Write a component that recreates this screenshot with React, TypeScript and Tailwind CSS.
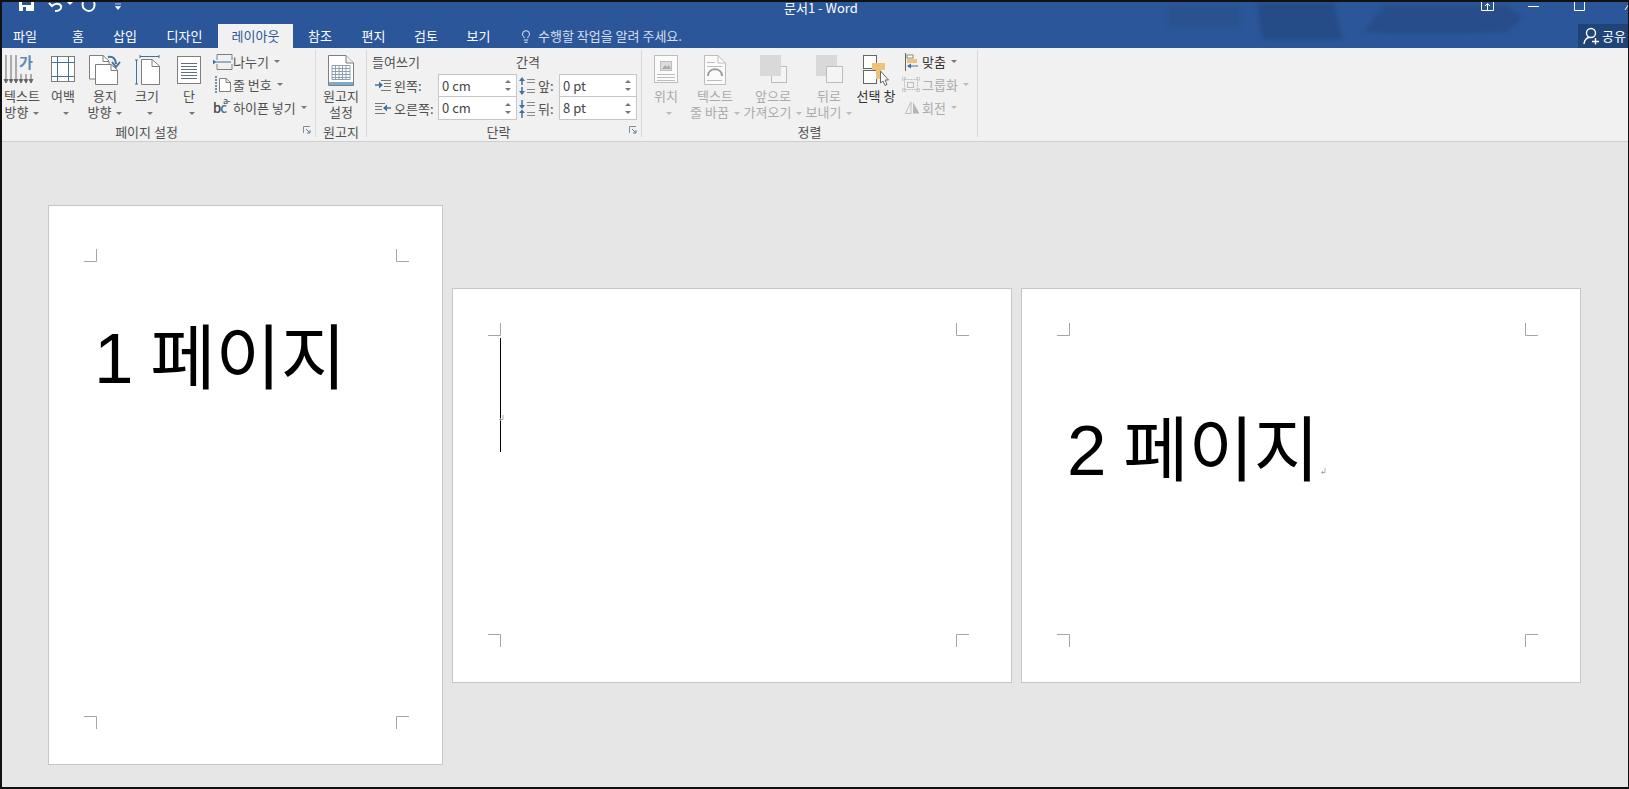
// Word ribbon (레이아웃 tab) with three pages in the document canvas.
import { Lightbulb } from 'lucide-react';
import type { ReactNode } from 'react';

const BLUE = '#41719c';
const LINE = '#7f7f7f';
const OFF = '#bdbdbd';

function Caret({ off }: { off?: boolean }) {
  return <span className={`inline-block w-0 h-0 ml-[5px] align-middle border-x-[3px] border-t-[3px] border-x-transparent ${off ? 'border-t-[#bbbbbb]' : 'border-t-[#777777]'}`} />;
}

function BigButton(props: { icon: ReactNode; lines: ReactNode[]; className: string; off?: boolean; dark?: boolean }) {
  const color = props.off ? 'text-[#ababab]' : props.dark ? 'text-[#333333]' : 'text-[#505050]';
  return (
    <div className={`flex flex-col items-center shrink-0 pt-[5px] ${props.className} ${color}`}>
      <div className="h-[33px] flex items-start justify-center">{props.icon}</div>
      {props.lines.map((l, i) => (
        <div key={i} className="h-[16px] leading-[16px] whitespace-nowrap">{l}</div>
      ))}
    </div>
  );
}

function SmallRow(props: { icon: ReactNode; label: string; off?: boolean; dark?: boolean }) {
  const color = props.off ? 'text-[#ababab]' : props.dark ? 'text-[#333333]' : 'text-[#505050]';
  return (
    <div className={`h-[23px] flex items-center whitespace-nowrap ${color}`}>
      <span className="w-[20px] h-[20px] flex items-center shrink-0">{props.icon}</span>
      {props.label}
      <Caret off={props.off} />
    </div>
  );
}

function Launcher() {
  return (
    <svg width="8" height="8" viewBox="0 0 8 8" className="absolute right-[4px] bottom-[3px]" fill="none">
      <path d="M0.5 7V0.5H7" stroke="#8a8a8a" />
      <path d="M3 3L7 7M7 4V7H4" stroke="#5f7f9f" />
    </svg>
  );
}

function Group(props: { label: string; className: string; labelClass?: string; launcher?: boolean; children: ReactNode }) {
  return (
    <section className={`relative shrink-0 h-[87px] mt-[2px] border-r border-[#d9d9d9] ${props.className}`}>
      <div className="h-[74px] flex">{props.children}</div>
      <div className={`h-[16px] leading-[16px] text-center text-[#505050] whitespace-nowrap ${props.labelClass ?? ''}`}>{props.label}</div>
      {props.launcher && <Launcher />}
    </section>
  );
}

function SpinField(props: { value: string; top?: boolean }) {
  return (
    <div className={`h-full flex items-center justify-between bg-white border border-[#c6c6c6] pl-[3px] pr-[5px] text-[#444444] ${props.top ? '' : 'border-t-0'}`}>
      {props.value}
      <span className="flex flex-col gap-[5px]">
        <span className="w-0 h-0 border-x-[3px] border-b-[3px] border-x-transparent border-b-[#777777]" />
        <span className="w-0 h-0 border-x-[3px] border-t-[3px] border-x-transparent border-t-[#777777]" />
      </span>
    </div>
  );
}

// ---- ribbon icons ----
function TextDirIcon() {
  return (
    <svg width="36" height="30" viewBox="0 0 36 30" fill="none" className="overflow-visible">
      {[2, 7, 12, 17, 22, 27].map((x, i) => (
        <g key={x} stroke="#666666">
          <path d={`M${x} ${i < 3 ? 0 : 19}V26`} />
          <path d={`M${x - 2} 24L${x} 28L${x + 2} 24`} fill="#666666" />
        </g>
      ))}
      <text x="15" y="13" fontSize="15" fontWeight="700" fill="#5b8bb8" fontFamily="Noto Sans CJK KR">가</text>
    </svg>
  );
}

function MarginIcon() {
  return (
    <svg width="24" height="28" viewBox="0 0 24 28" fill="#fff" stroke={LINE}>
      <rect x="0.5" y="1.5" width="23" height="25" />
      <path d="M6.5 1.5V26.5M17.5 1.5V26.5M.5 7.5H23.5M.5 21.5H23.5" stroke={BLUE} />
    </svg>
  );
}

function OrientIcon() {
  return (
    <svg width="32" height="31" viewBox="0 0 32 31" fill="#fff" stroke={LINE}>
      <path d="M.5 .5H14L20 6V24H.5Z" />
      <path d="M6.5 9.5H22L28.5 15V29.5H6.5Z" />
      <path d="M14 .5V6.5H20M22 9.5V15.5H28.5" fill="none" />
      <path d="M19 2C24 1 27 4 27 9" stroke={BLUE} strokeWidth="2" fill="none" />
      <path d="M23 7L27 12L31 7" stroke={BLUE} strokeWidth="2" fill="none" />
    </svg>
  );
}

function SizeIcon() {
  return (
    <svg width="26" height="30" viewBox="0 0 26 30" fill="#fff" stroke={LINE}>
      <path d="M7.5 4.5H18L25.5 11V29.5H7.5Z" />
      <path d="M18 4.5V11.5H25.5" fill="none" />
      <path d="M6 1.5H25M6 0V3M25 0V3M2.5 5V29M1 5H4M1 29H4" stroke={BLUE} fill="none" />
    </svg>
  );
}

function ColumnIcon() {
  return (
    <svg width="24" height="29" viewBox="0 0 24 29" fill="#fff" stroke={LINE}>
      <rect x=".5" y="1.5" width="23" height="27" />
      <path d="M4 8.5H20M4 11.5H20M4 14.5H20M4 17.5H20M4 20.5H20M4 23.5H20" stroke="#5f6f7f" fill="none" />
    </svg>
  );
}

function BreakIcon() {
  return (
    <svg width="20" height="16" viewBox="0 0 20 16" fill="none" stroke={LINE}>
      <path d="M4 .5H19M4 15.5H19M4 .5V6M4 10V15.5M19 .5V6M19 10V15.5" />
      <path d="M0 8H18" stroke={BLUE} />
      <path d="M0 5.5L3 8L0 10.5Z" fill={BLUE} stroke="none" />
    </svg>
  );
}

function LineNumIcon() {
  return (
    <svg width="18" height="18" viewBox="0 0 18 18" fill="none">
      <path d="M2 1H4M2 4H4M2 7H4M2 10H4M2 13H4M2 16H4" stroke={BLUE} strokeWidth="1.5" />
      <path d="M6.5 2.5H13L17.5 6.5V15.5H6.5Z" fill="#fff" stroke={LINE} />
      <path d="M13 2.5V6.5H17.5" stroke={LINE} />
    </svg>
  );
}

function HyphenIcon() {
  return <span className="relative text-[13px] leading-none font-medium text-[#444444] tracking-[-1px]">b<span className="text-[#41719c]">c</span><span className="absolute left-[10px] -top-[5px] text-[9px] text-[#555555]">a-</span></span>;
}

function ManuscriptIcon() {
  return (
    <svg width="26" height="31" viewBox="0 0 26 31" fill="none">
      <path d="M.5 .5H18L25.5 8V30.5H.5Z" fill="#fff" stroke={LINE} />
      <path d="M18 .5V8H25.5" fill="#eeeeee" stroke={LINE} />
      <path d="M4 10.5H22V24.5H4ZM4 13.5H22M4 16.5H22M4 19.5H22M4 22.5H22M7.5 10V25M11 10V25M14.5 10V25M18 10V25" stroke="#8f9fb0" />
      <path d="M1 28.5H25" stroke="#7fa8d0" strokeWidth="3" />
    </svg>
  );
}

function IndentLeftIcon() {
  return (
    <svg width="16" height="13" viewBox="0 0 16 13" fill="none">
      <path d="M6 1.5H16M9 4.5H16M9 7.5H16M6 11.5H16" stroke="#777777" />
      <path d="M0 6H6" stroke={BLUE} strokeWidth="1.5" />
      <path d="M4 2.5L8 6L4 9.5Z" fill={BLUE} />
    </svg>
  );
}

function IndentRightIcon() {
  return (
    <svg width="16" height="13" viewBox="0 0 16 13" fill="none">
      <path d="M0 1.5H10M0 4.5H7M0 7.5H7M0 11.5H10" stroke="#777777" />
      <path d="M10 6H16" stroke={BLUE} strokeWidth="1.5" />
      <path d="M12 2.5L8 6L12 9.5Z" fill={BLUE} />
    </svg>
  );
}

function SpaceBeforeIcon() {
  return (
    <svg width="16" height="18" viewBox="0 0 16 18" fill="none">
      <path d="M3 1V8M3 10V17" stroke={BLUE} strokeWidth="1.5" />
      <path d="M0 4L3 0L6 4ZM0 14L3 18L6 14Z" fill={BLUE} />
      <path d="M8 2.5H16M8 5.5H16M8 12.5H16M8 15.5H16" stroke="#888888" />
    </svg>
  );
}

function SpaceAfterIcon() {
  return (
    <svg width="16" height="18" viewBox="0 0 16 18" fill="none">
      <path d="M3 0V7M3 11V18" stroke={BLUE} strokeWidth="1.5" />
      <path d="M0 5L3 9L6 5ZM0 13L3 9.5L6 13Z" fill={BLUE} />
      <path d="M8 2.5H16M8 5.5H16M8 12.5H16M8 15.5H16" stroke="#888888" />
    </svg>
  );
}

function PositionIcon() {
  return (
    <svg width="24" height="28" viewBox="0 0 24 28" fill="#fbfbfb" stroke={OFF}>
      <rect x=".5" y=".5" width="23" height="27" />
      <rect x="6.5" y="6.5" width="11" height="9" fill="#dddddd" />
      <path d="M8 14L11 10L13 12L15 10L17 14Z" fill="#aaaaaa" stroke="none" />
      <path d="M3 19.5H21M3 22.5H21M3 25.5H21" fill="none" />
    </svg>
  );
}

function WrapIcon() {
  return (
    <svg width="22" height="30" viewBox="0 0 22 30" fill="#fbfbfb" stroke={OFF}>
      <path d="M.5 .5H14L21.5 8V29.5H.5Z" />
      <path d="M14 .5V8H21.5M3 7.5H11M3 11.5H18M3 25.5H18" fill="none" />
      <path d="M4 21C4 12 18 12 18 21" fill="none" stroke="#9a9a9a" strokeWidth="2" />
    </svg>
  );
}

function StackIcon({ front }: { front?: boolean }) {
  return (
    <svg width="27" height="29" viewBox="0 0 27 29" fill="none">
      {front ? (
        <>
          <rect x="11.5" y="11.5" width="15" height="16" fill="#f4f4f4" stroke={OFF} />
          <rect x="0" y="0" width="21" height="21" fill="#d9d9d9" />
        </>
      ) : (
        <>
          <rect x="0" y="0" width="21" height="21" fill="#d9d9d9" />
          <rect x="10.5" y="11.5" width="16" height="16" fill="#f4f4f4" stroke={OFF} />
        </>
      )}
    </svg>
  );
}

function SelectionIcon() {
  return (
    <svg width="27" height="31" viewBox="0 0 27 31" fill="none">
      <rect x=".5" y=".5" width="13" height="13" fill="#fff" stroke="#666666" />
      <rect x=".5" y="15.5" width="13" height="13" fill="#fff" stroke="#666666" />
      <rect x="9" y="8" width="13" height="7" fill="#eec27a" />
      <rect x="13" y="15" width="5" height="9" fill="#eec27a" />
      <path d="M17.5 16V28L20 26L22 30.5L24 29.5L22 25H25.5Z" fill="#fff" stroke="#666666" />
    </svg>
  );
}

function AlignIcon() {
  return (
    <svg width="13" height="18" viewBox="0 0 13 18" fill="none" className="ml-[3px]">
      <path d="M.5 0V18" stroke="#666666" />
      <rect x="2" y="2" width="6" height="3" fill="#fff" stroke="#888888" />
      <rect x="2" y="6" width="10" height="4" fill="#eec27a" />
      <path d="M3 13H13" stroke={BLUE} />
      <path d="M6 10.5L2 13L6 15.5Z" fill={BLUE} />
    </svg>
  );
}

function GroupIcon() {
  return (
    <svg width="18" height="15" viewBox="0 0 18 15" fill="none" stroke={OFF}>
      <rect x="2.5" y="2.5" width="13" height="10" strokeDasharray="2 1" />
      <rect x="5.5" y="5.5" width="6" height="5" />
      <path d="M0 0H3V3H0ZM15 0H18V3H15ZM0 12H3V15H0ZM15 12H18V15H15Z" />
    </svg>
  );
}

function RotateIcon() {
  return (
    <svg width="15" height="13" viewBox="0 0 15 13" fill="none" className="ml-[3px]">
      <path d="M.5 12.5L6 1V12.5Z" stroke={OFF} />
      <path d="M8 1L14.5 12.5H8Z" fill="#b5b5b5" />
    </svg>
  );
}

// ---- page parts ----
function CropMark({ className, d }: { className: string; d: string }) {
  return (
    <svg width="13" height="13" viewBox="0 0 13 13" fill="none" className={`absolute ${className}`}>
      <path d={d} stroke="#a6a6a6" />
    </svg>
  );
}

function CropMarks({ wide }: { wide?: boolean }) {
  return (
    <>
      <CropMark className={`left-[35px] ${wide ? 'top-[34px]' : 'top-[43px]'}`} d="M0 12.5H12.5V0" />
      <CropMark className={wide ? 'right-[42px] top-[34px]' : 'right-[33px] top-[43px]'} d="M.5 0V12.5H13" />
      <CropMark className="left-[35px] bottom-[35px]" d="M0 .5H12.5V13" />
      <CropMark className={`bottom-[35px] ${wide ? 'right-[42px]' : 'right-[33px]'}`} d="M13 .5H.5V13" />
    </>
  );
}

function ParaMark({ className }: { className: string }) {
  return (
    <svg width="5" height="7" viewBox="0 0 5 7" fill="none" className={className}>
      <path d="M4 0V4.5H.5M2 3L.5 4.5L2 6" stroke="#999999" strokeWidth=".8" />
    </svg>
  );
}

const TABS = [
  { label: '파일', cls: 'w-[46px] mr-[7px] text-white' },
  { label: '홈', cls: 'w-[46px] text-white' },
  { label: '삽입', cls: 'w-[48px] mr-[2px] text-white' },
  { label: '디자인', cls: 'w-[67px] text-white' },
  { label: '레이아웃', cls: 'w-[75px] bg-[#f1f1f1] text-[#2b579a]' },
  { label: '참조', cls: 'w-[54px] text-white' },
  { label: '편지', cls: 'w-[53px] text-white' },
  { label: '검토', cls: 'w-[52px] text-white' },
  { label: '보기', cls: 'w-[53px] text-white' },
];

export default function App() {
  return (
    <div className="w-[1629px] h-[789px] overflow-hidden border-t-2 border-l-2 border-r border-b-2 border-[#111111] bg-[#e6e6e6] text-[13px] font-['Noto_Sans_CJK_KR','Noto_Sans',sans-serif] flex flex-col">
      {/* title + tabs */}
      <header className="relative h-[46px] shrink-0 bg-[#2b579a]">
        {/* the dark smudge pattern of the Office theme */}
        <svg width="365" height="40" viewBox="0 0 365 40" className="absolute right-[101px] top-0 pointer-events-none blur-[2px]">
          <path d="M6 5H78V25H6Z" fill="#29528f" />
          <path d="M95 1H172L181 38H100Z" fill="#264c87" />
          <path d="M201 30L222 3H345L361 16L345 30L290 33H240Z" fill="#274e8a" />
        </svg>
        <div className="relative h-[22px] flex items-start text-white">
          {/* quick access toolbar, cut by the top of the shot */}
          <svg width="140" height="11" viewBox="0 0 140 11" fill="none" className="shrink-0">
            <path d="M17 0H32V9H17Z" fill="#fff" />
            <path d="M20 0H29V3H20ZM21 5H24V9H21Z" fill="#2b579a" />
            <path d="M47 1L50 4C54 0 60 2 59 6C58 9 55 9 53 9" stroke="#fff" strokeWidth="2" />
            <path d="M65 0L68 3L71 0Z" fill="#fff" />
            <path d="M81 0C79 7 85 9 87 9C90 9 94 6 92 0" stroke="#fff" strokeWidth="2" />
            <path d="M113 2H119M113.5 4.5H118.5L116 7.5Z" fill="#fff" stroke="#fff" strokeWidth=".7" />
          </svg>
          <span className="ml-[642px] leading-[12px] whitespace-nowrap">문서1 - Word</span>
          {/* window controls, also cut at the top */}
          <svg width="150" height="10" viewBox="0 0 150 10" fill="none" className="shrink-0 ml-[623px]">
            <path d="M.5 0V8.5H12.5V0M6.5 8V2M4 4L6.5 1.5L9 4" stroke="#fff" />
            <path d="M47 4.5H58" stroke="#fff" />
            <path d="M93.5 0V8.5H103.5V0" stroke="#fff" />
            <path d="M144 8L148 2" stroke="#fff" />
          </svg>
        </div>
        <nav className="relative h-[24px] flex items-center">
          {TABS.map(t => (
            <div key={t.label} className={`h-full leading-[23px] text-center shrink-0 ${t.cls}`}>{t.label}</div>
          ))}
          <Lightbulb className="w-[14px] h-[15px] ml-[14px] mr-[5px] text-white shrink-0" strokeWidth={1.5} />
          <span className="text-[#d5deec] whitespace-nowrap">수행할 작업을 알려 주세요.</span>
          <div className="ml-auto w-[50px] h-full bg-[#1e4478] flex items-center text-white whitespace-nowrap">
            <svg width="17" height="18" viewBox="0 0 17 18" fill="none" className="ml-[5px] mr-[2px] shrink-0">
              <circle cx="8" cy="6" r="4.5" stroke="#fff" strokeWidth="1.4" />
              <path d="M1 17C1.5 13 3.5 11 6 10.5" stroke="#fff" strokeWidth="1.4" />
              <path d="M9 14.5H16M12.5 11V17.5" stroke="#fff" strokeWidth="1.4" />
            </svg>
            공유
          </div>
        </nav>
      </header>

      {/* ribbon */}
      <div className="h-[94px] shrink-0 bg-[#f1f1f1] border-b border-[#cfcfcf] flex">
        <Group label="페이지 설정" launcher labelClass="pr-[24px]" className="w-[314px]">
          <BigButton className="w-[40px]" icon={<TextDirIcon />} lines={['텍스트', <>방향<Caret /></>]} />
          <BigButton className="w-[42px]" icon={<MarginIcon />} lines={['여백', <Caret />]} />
          <BigButton className="w-[42px]" icon={<OrientIcon />} lines={['용지', <>방향<Caret /></>]} />
          <BigButton className="w-[42px]" icon={<SizeIcon />} lines={['크기', <Caret />]} />
          <BigButton className="w-[42px]" icon={<ColumnIcon />} lines={['단', <Caret />]} />
          <div className="ml-[3px]">
            <SmallRow icon={<BreakIcon />} label="나누기" />
            <SmallRow icon={<LineNumIcon />} label="줄 번호" />
            <SmallRow icon={<HyphenIcon />} label="하이픈 넣기" />
          </div>
        </Group>

        <Group label="원고지" className="w-[51px]">
          <BigButton className="w-[50px]" icon={<ManuscriptIcon />} lines={['원고지', '설정']} />
        </Group>

        <Group label="단락" launcher labelClass="pr-[16px]" className="w-[275px] pl-[5px]">
          <div className="w-[144px] shrink-0 text-[#505050]">
            <div className="h-[24px] leading-[24px]">들여쓰기</div>
            <div className="h-[23px] flex items-center pl-[3px]">
              <span className="w-[19px] shrink-0"><IndentLeftIcon /></span>
              <span className="w-[44px] shrink-0">왼쪽:</span>
              <div className="w-[79px] h-full shrink-0"><SpinField value="0 cm" top /></div>
            </div>
            <div className="h-[23px] flex items-center pl-[3px]">
              <span className="w-[19px] shrink-0"><IndentRightIcon /></span>
              <span className="w-[44px] shrink-0">오른쪽:</span>
              <div className="w-[79px] h-full shrink-0"><SpinField value="0 cm" /></div>
            </div>
          </div>
          <div className="w-[121px] shrink-0 text-[#505050]">
            <div className="h-[24px] leading-[24px]">간격</div>
            <div className="h-[23px] flex items-center pl-[3px]">
              <span className="w-[19px] shrink-0"><SpaceBeforeIcon /></span>
              <span className="w-[21px] shrink-0">앞:</span>
              <div className="w-[78px] h-full shrink-0"><SpinField value="0 pt" top /></div>
            </div>
            <div className="h-[23px] flex items-center pl-[3px]">
              <span className="w-[19px] shrink-0"><SpaceAfterIcon /></span>
              <span className="w-[21px] shrink-0">뒤:</span>
              <div className="w-[78px] h-full shrink-0"><SpinField value="8 pt" /></div>
            </div>
          </div>
        </Group>

        <Group label="정렬" className="w-[336px]">
          <BigButton off className="w-[48px]" icon={<PositionIcon />} lines={['위치', <Caret off />]} />
          <BigButton off className="w-[50px]" icon={<WrapIcon />} lines={['텍스트', <>줄 바꿈<Caret off /></>]} />
          <BigButton off className="w-[66px]" icon={<StackIcon front />} lines={['앞으로', <>가져오기<Caret off /></>]} />
          <BigButton off className="w-[46px]" icon={<StackIcon />} lines={['뒤로', <>보내기<Caret off /></>]} />
          <BigButton dark className="w-[48px]" icon={<SelectionIcon />} lines={['선택 창']} />
          <div className="ml-[2px]">
            <SmallRow dark icon={<AlignIcon />} label="맞춤" />
            <SmallRow off icon={<GroupIcon />} label="그룹화" />
            <SmallRow off icon={<RotateIcon />} label="회전" />
          </div>
        </Group>
      </div>

      {/* document canvas */}
      <main className="flex-1 flex items-center gap-[9px] pl-[46px] pt-[41px] text-black">
        <div className="relative shrink-0 w-[395px] h-[560px] bg-white border border-[#c6c6c6] pl-[45px] pt-[103px]">
          <CropMarks />
          <div className="text-[71px] leading-[100px] whitespace-nowrap [word-spacing:-3px] font-['Liberation_Sans','Noto_Sans_CJK_KR',sans-serif]">1 페이지</div>
        </div>
        <div className="relative shrink-0 w-[560px] h-[395px] bg-white border border-[#c6c6c6]">
          <CropMarks wide />
          {/* caret sits over the empty first line */}
          <div className="absolute left-[47px] top-[49px] w-px h-[114px] bg-black" />
          <ParaMark className="absolute left-[46px] top-[126px]" />
        </div>
        <div className="relative shrink-0 w-[560px] h-[395px] bg-white border border-[#c6c6c6] pl-[45px] pt-[112px]">
          <CropMarks wide />
          <div className="text-[71px] leading-[100px] whitespace-nowrap flex [word-spacing:-3px] font-['Liberation_Sans','Noto_Sans_CJK_KR',sans-serif]">
            2 페이지
            <ParaMark className="ml-[2px] mt-[67px]" />
          </div>
        </div>
      </main>
    </div>
  );
}
